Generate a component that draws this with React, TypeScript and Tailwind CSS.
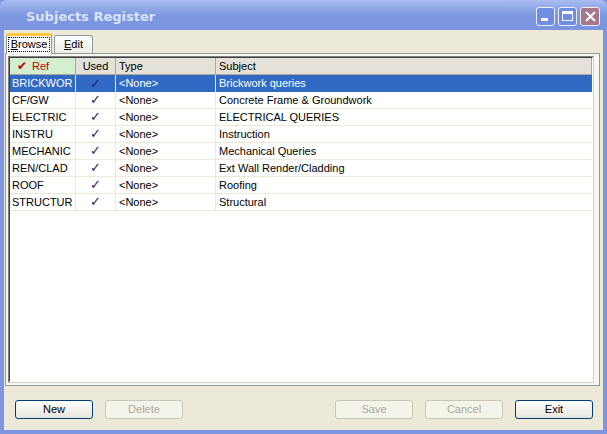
import React from "react";

const rows = [
  ["BRICKWOR", "Brickwork queries"],
  ["CF/GW", "Concrete Frame & Groundwork"],
  ["ELECTRIC", "ELECTRICAL QUERIES"],
  ["INSTRU", "Instruction"],
  ["MECHANIC", "Mechanical Queries"],
  ["REN/CLAD", "Ext Wall Render/Cladding"],
  ["ROOF", "Roofing"],
  ["STRUCTUR", "Structural"],
];

function Btn({ label, disabled }: { label: string; disabled?: boolean }) {
  return (
    <div
      className={
        disabled
          ? "w-[78px] h-[19px] rounded-[3px] border border-[#c9c7ba] bg-[#f5f4ea] text-[#aca899] flex items-center justify-center text-[11px]"
          : "w-[78px] h-[19px] rounded-[3px] border border-[#003c74] bg-gradient-to-b from-[#ffffff] to-[#e6e5dc] text-black flex items-center justify-center text-[11px]"
      }
    >
      {label}
    </div>
  );
}

export default function App() {
  return (
    <div
      className="w-[607px] h-[434px] bg-[#8095e0] flex flex-col overflow-hidden"
      style={{ fontFamily: '"Liberation Sans", Arial, sans-serif' }}
    >
      {/* Title bar */}
      <div className="h-[30px] shrink-0 flex items-center bg-gradient-to-b from-[#a9bdf0] via-[#7e98e0] to-[#7a94de] rounded-t-[6px] pl-[26px] pr-[7px]">
        <div className="flex-1 text-[#d8e4f8] font-bold text-[13px] pt-[3px]" style={{ fontFamily: '"DejaVu Sans", sans-serif' }}>
          Subjects Register
        </div>
        <div className="flex gap-[3px] items-center pt-[2px]">
          <div className="w-[19px] h-[19px] rounded-[3px] border border-[#e8eefc] bg-[#6f8ee2] relative">
            <div className="absolute left-[4px] bottom-[4px] w-[7px] h-[3px] bg-white" />
          </div>
          <div className="w-[19px] h-[19px] rounded-[3px] border border-[#e8eefc] bg-[#6f8ee2] flex items-center justify-center">
            <div className="w-[11px] h-[10px] border border-white border-t-[3px]" />
          </div>
          <div className="w-[20px] h-[19px] rounded-[3px] border border-[#e8eefc] bg-[#a8768a] flex items-center justify-center">
            <svg width="11" height="11" viewBox="0 0 11 11">
              <path d="M1 1 L10 10 M10 1 L1 10" stroke="white" strokeWidth="2" />
            </svg>
          </div>
        </div>
      </div>

      {/* Client */}
      <div className="flex-1 mx-[4px] mb-[4px] bg-[#ece9d8] flex flex-col text-[11px]">
        {/* tabs */}
        <div className="h-[23px] flex items-end pl-[2px] pt-[3px] relative z-10">
          <div className="h-[21px] w-[46px] bg-[#fcfcfe] border-x border-[#919b9c] border-t-[3px] border-t-[#ffc83c] rounded-t-[3px] flex items-start justify-center pt-[1px] -mb-[1px]">
            <span className="border border-dotted border-black px-[2px] leading-[13px]">
              <span className="underline">B</span>rowse
            </span>
          </div>
          <div className="h-[18px] w-[39px] ml-[2px] bg-gradient-to-b from-[#ffffff] to-[#ecebe5] border-x border-t border-[#919b9c] rounded-t-[3px] flex items-center justify-center">
            <span>
              <span className="underline">E</span>dit
            </span>
          </div>
        </div>

        {/* panel */}
        <div className="ml-[1px] mr-[3px] h-[333px] bg-[#f7f6f1] border border-[#919b9c] pl-[2px] pt-[2px] pb-[2px] pr-[5px] flex">
          <div className="flex-1 border border-[#808080] border-r-[#d4d0c8] border-b-[#d4d0c8] flex">
            <div className="flex-1 border border-[#404040] border-r-white border-b-white bg-white flex flex-col">
              {/* header */}
              <div className="h-[17px] flex text-black border-b border-[#aca899]">
                <div className="w-[66px] bg-[#d4efcf] text-[#c00000] flex items-center pl-[7px] border-r border-[#aca899]">
                  <span className="text-[12px] mr-[5px]" style={{ fontFamily: '"DejaVu Sans", sans-serif' }}>✔</span>
                  Ref
                </div>
                <div className="w-[40px] bg-[#e3e1d8] flex items-center justify-center border-r border-[#aca899]">Used</div>
                <div className="w-[100px] bg-[#e3e1d8] flex items-center pl-[3px] border-r border-[#aca899]">Type</div>
                <div className="flex-1 bg-[#e3e1d8] flex items-center pl-[3px] border-r border-[#aca899]">Subject</div>
              </div>
              {rows.map((r, i) => {
                const sel = i === 0;
                return (
                  <div
                    key={r[0]}
                    className={
                      "h-[17px] flex " +
                      (sel ? "bg-[#316ac5] text-white" : "bg-white text-black border-b border-[#ece9d8]")
                    }
                  >
                    <div className="w-[66px] pl-[2px] flex items-center border-r border-[#ece9d8]">{r[0]}</div>
                    <div className="w-[40px] flex items-center justify-center border-r border-[#ece9d8] text-[#1c1c6c]" style={{ fontFamily: '"DejaVu Sans", sans-serif', fontSize: 13 }}>
                      ✓
                    </div>
                    <div className="w-[100px] pl-[3px] flex items-center border-r border-[#ece9d8]">&lt;None&gt;</div>
                    <div className="flex-1 pl-[3px] flex items-center">{r[1]}</div>
                  </div>
                );
              })}
            </div>
          </div>
        </div>

        {/* buttons */}
        <div className="flex-1 flex items-start pt-[14px] pl-[11px] pr-[10px]">
          <Btn label="New" />
          <div className="ml-[12px]">
            <Btn label="Delete" disabled />
          </div>
          <div className="flex-1" />
          <Btn label="Save" disabled />
          <div className="ml-[12px]">
            <Btn label="Cancel" disabled />
          </div>
          <div className="ml-[12px]">
            <Btn label="Exit" />
          </div>
        </div>
      </div>
    </div>
  );
}
